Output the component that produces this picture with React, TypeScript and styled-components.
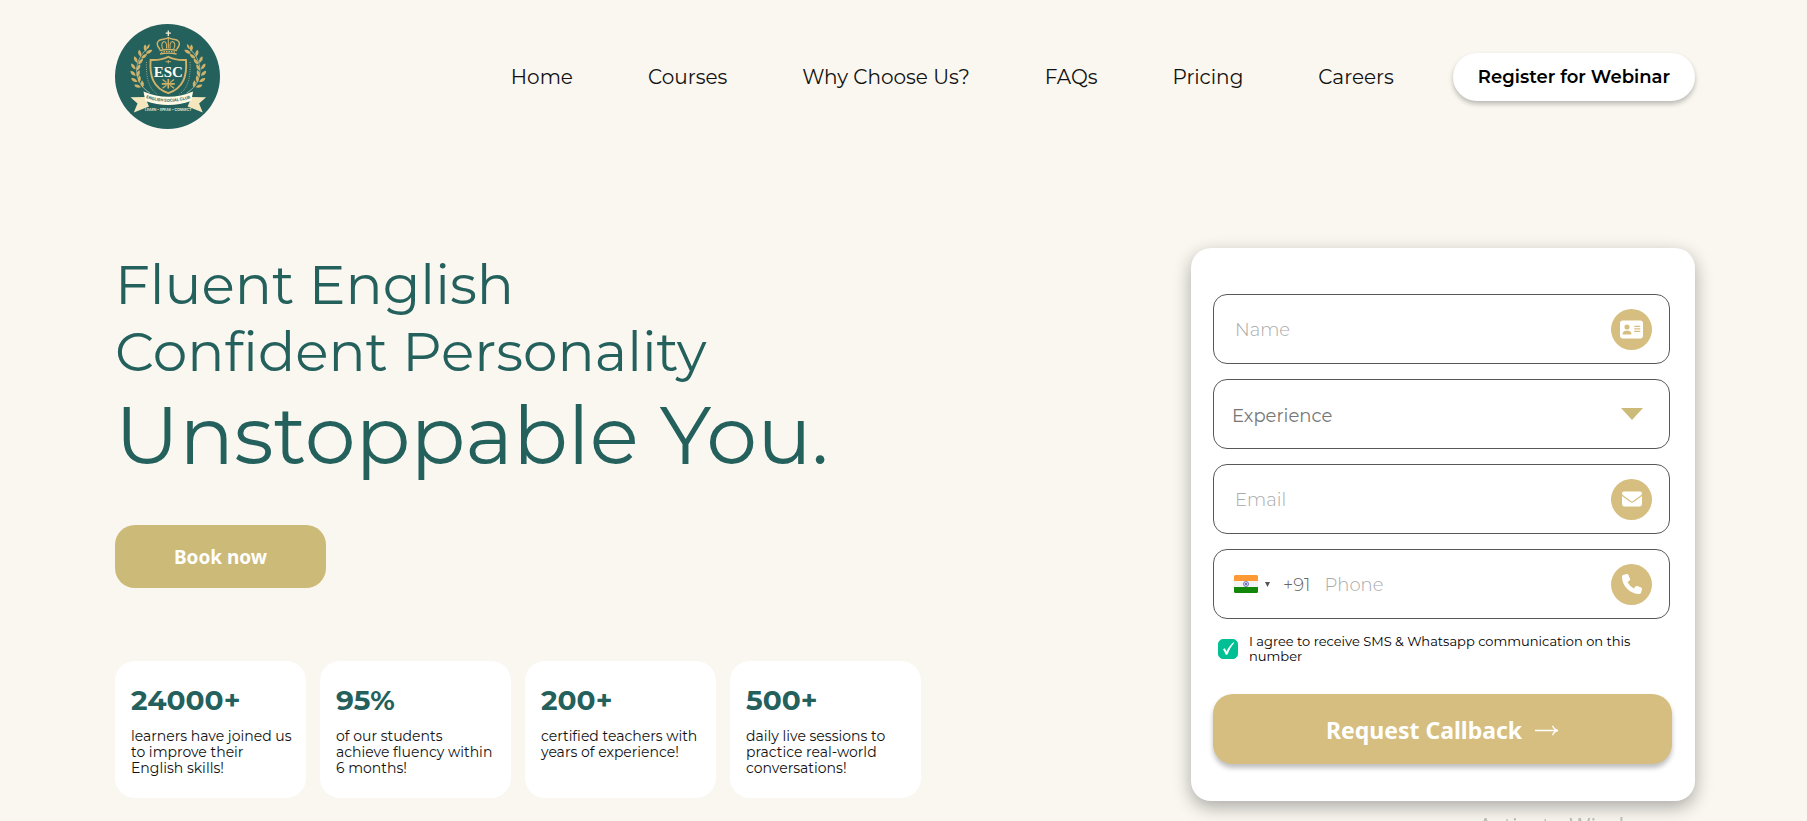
import React from 'react';
import styled, { createGlobalStyle } from 'styled-components';
import { FaAddressCard, FaEnvelope, FaPhone } from 'react-icons/fa6';

const TEAL = '#24605c';
const GOLD = '#d6be80';
const OLIVE = '#ccba78';
const CREAM = '#faf7f0';

const GlobalStyle = createGlobalStyle`
  *, *::before, *::after { box-sizing: border-box; }
  body {
    margin: 0;
    background: ${CREAM};
    color: #111;
    font-family: Montserrat, Inter, sans-serif;
    font-size: 14px;
  }
  button, input, select { font: inherit; color: inherit; }
`;

const Page = styled.div`
  min-height: 100vh;
  padding: 24px 112px 20px 115px;
  overflow: hidden;
`;

const Header = styled.header`
  display: flex;
  align-items: center;
  justify-content: space-between;
`;

const LogoLink = styled.a`
  display: block;
  width: 105px;
  height: 105px;
  svg { display: block; width: 100%; height: 100%; }
`;

const Nav = styled.nav`
  display: flex;
  align-items: center;
  gap: 75px;
`;

const NavLink = styled.a`
  color: #111;
  font-size: 20px;
  line-height: 24px;
  text-decoration: none;
  white-space: nowrap;
`;

const RegisterButton = styled.button`
  height: 48px;
  margin-left: -16px;
  padding: 0 25px;
  border: 0;
  border-radius: 24px;
  background: #fff;
  color: #000;
  font-size: 18px;
  font-weight: 600;
  white-space: nowrap;
  box-shadow: 0 3px 5px rgba(0, 0, 0, 0.25);
  cursor: pointer;
`;

const Hero = styled.main`
  display: flex;
  align-items: flex-start;
  justify-content: space-between;
  gap: 40px;
  padding-top: 119px;
`;

const Pitch = styled.section`
  flex: 0 1 806px;
  padding-top: 3px;
`;

const Headline = styled.h1`
  margin: 0;
  color: ${TEAL};
  font-size: 55px;
  font-weight: 400;
  line-height: 67px;
`;

const HeadlineRow = styled.span<{ $large?: boolean }>`
  display: block;
  ${({ $large }) => $large && 'font-size: 81px; line-height: 101px;'}
`;

const BookButton = styled.button`
  width: 211px;
  height: 63px;
  margin-top: 39px;
  border: 0;
  border-radius: 20px;
  background: ${OLIVE};
  color: #fff;
  font-family: 'Noto Sans', sans-serif;
  font-size: 19px;
  font-weight: 700;
  cursor: pointer;
`;

const Stats = styled.ul`
  display: grid;
  grid-template-columns: repeat(4, 1fr);
  gap: 14px;
  margin: 73px 0 0;
  padding: 0;
  list-style: none;
`;

const StatCard = styled.li`
  padding: 22px 12px 22px 16px;
  border-radius: 20px;
  background: #fff;
`;

const StatValue = styled.strong`
  display: block;
  color: ${TEAL};
  font-size: 28px;
  font-weight: 700;
  line-height: 34px;
`;

const StatText = styled.p`
  margin: 11px 0 0;
  line-height: 16px;
`;

const FormCard = styled.form`
  display: flex;
  flex: 0 0 504px;
  flex-direction: column;
  gap: 15px;
  padding: 46px 25px 37px 22px;
  border-radius: 20px;
  background: #fff;
  box-shadow: 0 6px 18px rgba(0, 0, 0, 0.32);
`;

const Field = styled.div`
  display: flex;
  align-items: center;
  height: 70px;
  padding: 0 17px 0 20px;
  border: 1px solid #58585a;
  border-radius: 14px;
`;

const TextInput = styled.input`
  flex: 1;
  min-width: 0;
  height: 100%;
  padding: 2px 0 0 1px;
  border: 0;
  outline: 0;
  background: transparent;
  color: #444;
  font-size: 18px;
  font-weight: 300;
  &::placeholder { color: #a9a9a9; opacity: 1; }
`;

const Badge = styled.span<{ $iconHeight?: number }>`
  display: grid;
  place-items: center;
  width: 41px;
  height: 41px;
  border-radius: 50%;
  background: ${GOLD};
  color: #fff;
  svg { width: auto; height: ${({ $iconHeight = 20 }) => $iconHeight}px; }
`;

const SelectField = styled.div`
  display: grid;
  align-items: center;
  height: 70px;
  border: 1px solid #58585a;
  border-radius: 14px;
  > * { grid-area: 1 / 1; }
  svg {
    justify-self: end;
    margin-right: 26px;
    pointer-events: none;
  }
`;

const Select = styled.select`
  width: 100%;
  height: 100%;
  padding: 4px 60px 0 18px;
  border: 0;
  outline: 0;
  border-radius: 14px;
  background: transparent;
  color: #777;
  font-size: 18px;
  appearance: none;
`;

const CountryButton = styled.button`
  display: flex;
  align-items: center;
  gap: 7px;
  margin-right: 13px;
  padding: 0;
  border: 0;
  background: transparent;
  cursor: pointer;
`;

const DialCode = styled.span`
  margin-right: 13px;
  padding-top: 2px;
  color: #666;
  font-size: 18px;
  font-weight: 300;
`;

const Consent = styled.label`
  display: flex;
  align-items: center;
  gap: 11px;
  padding-left: 5px;
  color: #000;
  font-size: 13px;
  line-height: 15px;
`;

const CheckWrap = styled.span`
  display: grid;
  flex: none;
  > * { grid-area: 1 / 1; }
  svg { pointer-events: none; visibility: hidden; }
  input:checked + svg { visibility: visible; }
`;

const Checkbox = styled.input`
  width: 20px;
  height: 20px;
  margin: 0;
  border: 1px solid #03c094;
  border-radius: 5px;
  background: #fff;
  appearance: none;
  &:checked { background: #03c094; }
`;

const ConsentText = styled.span`
  max-width: 390px;
`;

const SubmitButton = styled.button`
  display: flex;
  align-items: center;
  justify-content: center;
  gap: 13px;
  height: 70px;
  margin: 15px -2px 0 0;
  padding: 2px 0 0;
  border: 0;
  border-radius: 20px;
  background: ${GOLD};
  color: #fff;
  font-family: 'Noto Sans', sans-serif;
  font-size: 23px;
  font-weight: 700;
  box-shadow: 0 4px 5px rgba(0, 0, 0, 0.25);
  cursor: pointer;
`;

const Watermark = styled.div`
  position: fixed;
  right: 140px;
  bottom: -20px;
  color: rgba(120, 120, 120, 0.45);
  font-family: 'Open Sans', sans-serif;
  font-size: 23px;
  line-height: 30px;
  pointer-events: none;
`;

const LEAVES = [
  [31, 27, 30], [26, 32, 20], [22.5, 38, 8], [20.5, 44.5, -4],
  [20.5, 51, -14], [22, 57, -26], [25.5, 62.5, -38],
];

const Branch = () => (
  <g>
    <path d="M34 23C24 31 18 44 24 57c2 5 6 9 11 12" fill="none" stroke="#bcd0bd" strokeWidth="0.7" />
    {LEAVES.map(([x, y, turn]) => (
      <g key={y} transform={`translate(${x} ${y}) rotate(${turn})`} fill="#d1b268">
        <path d="M0 1C-4-.5-4.600-3-3.800-5.200C-1-4.200.2-2 0 1Z" />
        <path d="M1 2.200C.6-1 2.200-3.200 5-4C5.400-1 4 1.600 1 2.200Z" />
      </g>
    ))}
    <path d="M32 25c-.4-2 .4-4 2.600-5 .4 2.200-.4 4.200-2.600 5Z" fill="#d1b268" />
  </g>
);

const Logo = () => (
  <svg viewBox="0 0 105 105" aria-hidden="true">
    <circle cx="52.500" cy="52.500" r="52.500" fill={TEAL} />
    <path d="M53.300 6.500v5.400M50.700 9.200h5.200" stroke="#f7f1da" strokeWidth="1.300" />
    <g fill="none" stroke="#d1b268">
      <path d="M45 25.500C42 22 41 18.500 44 16.500c3-1.700 6-.6 9.300-2.800 3.300 2.200 6.300 1.100 9.300 2.800 3 2 2 5.500-1 9" strokeWidth="1.500" />
      <path d="M48 25c-2-3.500-1.500-6.500 1-7.500 2.200.3 3 3 2.500 7M58.600 25c2-3.500 1.500-6.500-1-7.500-2.200.3-3 3-2.500 7M53.300 14v10.500" strokeWidth="1.100" />
      <path d="M44.500 26.500q8.800-2 17.600 0M45 30q8.300-1.600 16.600 0" strokeWidth="1.300" />
      <path d="M46 28.300q7.300-1.500 14.600 0" strokeWidth="1.200" strokeDasharray="1.500 1" />
    </g>
    <Branch />
    <g transform="translate(106.600 0) scale(-1 1)"><Branch /></g>
    <path d="M31.500 38C31 52 33 64 42 70M75.100 38c.5 14-1.500 26-10.500 32" fill="none" stroke="#a5b896" strokeWidth="0.900" strokeDasharray="1 1.300" />
    <path d="M53.300 32.800c4.500 2.600 10.500 3.500 17.700 3.200 1.200 16-2.500 28-17.700 33.200C38.100 64 34.400 52 35.600 36c7.200.3 13.200-.6 17.700-3.200Z" fill="none" stroke="#d1b268" strokeWidth="1.900" />
    <path d="M53.300 36v3.400M50.500 37.700h5.600" stroke="#d1b268" strokeWidth="0.900" />
    <text x="53.300" y="52.600" textAnchor="middle" fill="#fffdf0" fontFamily="'Liberation Serif', serif" fontWeight="700" fontSize="15">ESC</text>
    <path d="M46.800 59.800h13M53.300 55v9.600" stroke="#d1b268" strokeWidth="1.700" />
    <path d="M47.500 55.500l4 3M59.100 55.500l-4 3M47.500 64.200l4-3M59.100 64.200l-4-3" stroke="#d1b268" strokeWidth="1.100" />
    <path d="M30 73L15.500 73.200l7 6.200L18.800 88.500 34 82.500Z" fill="#f4e6bd" />
    <path d="M76.600 73l14.500.2-7 6.200 3.700 9.100L72.600 82.500Z" fill="#f4e6bd" />
    <path d="M28.500 67.500Q53.300 78 78.100 67.500L76.200 77Q53.300 85 30.400 77Z" fill="#fffbe6" />
    <path id="motto-curve" d="M28.500 73.200Q53.300 82.400 78.100 73.200" fill="none" />
    <text fill={TEAL} fontFamily="Inter, sans-serif" fontWeight="700" fontSize="4">
      <textPath href="#motto-curve" startOffset="50%" textAnchor="middle">ENGLISH SOCIAL CLUB</textPath>
    </text>
    <text x="53.300" y="86.600" textAnchor="middle" fill="#e9efdf" fontFamily="Inter, sans-serif" fontWeight="600" fontSize="3.400">LEARN • SPEAK • CONNECT</text>
  </svg>
);

const IndiaFlag = () => (
  <svg width="24" height="18" viewBox="0 0 24 18" aria-hidden="true">
    <rect width="24" height="18" rx="1.500" fill="#f3f3f3" />
    <path d="M1.500 0h21A1.500 1.500 0 0 1 24 1.500V6H0V1.500A1.500 1.500 0 0 1 1.500 0Z" fill="#ff9933" />
    <path d="M0 12h24v4.500a1.500 1.500 0 0 1-1.500 1.500h-21A1.500 1.500 0 0 1 0 16.500Z" fill="#138808" />
    <circle cx="12" cy="9" r="2.500" fill="#dcdcf0" stroke="#5a5aa8" strokeWidth="0.800" />
    <circle cx="12" cy="9" r="0.900" fill="#3c3c96" />
  </svg>
);

const NAV_ITEMS = ['Home', 'Courses', 'Why Choose Us?', 'FAQs', 'Pricing', 'Careers'];

const STATS = [
  { value: '24000+', text: 'learners have joined us to improve their English skills!' },
  { value: '95%', text: 'of our students achieve fluency within 6 months!' },
  { value: '200+', text: 'certified teachers with years of experience!' },
  { value: '500+', text: 'daily live sessions to practice real-world conversations!' },
];

export default function App() {
  return (
    <>
      <GlobalStyle />
      <Page>
        <Header>
          <LogoLink href="#" aria-label="English Social Club"><Logo /></LogoLink>
          <Nav>
            {NAV_ITEMS.map((item) => <NavLink key={item} href="#">{item}</NavLink>)}
            <RegisterButton type="button">Register for Webinar</RegisterButton>
          </Nav>
        </Header>

        <Hero>
          <Pitch>
            <Headline>
              <HeadlineRow>Fluent English</HeadlineRow>
              <HeadlineRow>Confident Personality</HeadlineRow>
              <HeadlineRow $large>Unstoppable You.</HeadlineRow>
            </Headline>
            <BookButton type="button">Book now</BookButton>
            <Stats>
              {STATS.map(({ value, text }) => (
                <StatCard key={value}>
                  <StatValue>{value}</StatValue>
                  <StatText>{text}</StatText>
                </StatCard>
              ))}
            </Stats>
          </Pitch>

          <FormCard onSubmit={(e) => e.preventDefault()}>
            <Field>
              <TextInput type="text" placeholder="Name" aria-label="Name" />
              <Badge $iconHeight={23}><FaAddressCard /></Badge>
            </Field>
            <SelectField>
              <Select aria-label="Experience" defaultValue="">
                <option value="">Experience</option>
                <option value="student">Student</option>
                <option value="professional">Professional</option>
              </Select>
              <svg width="22" height="12" viewBox="0 0 22 12" aria-hidden="true">
                <path d="M0 0h22L11 12Z" fill={OLIVE} />
              </svg>
            </SelectField>
            <Field>
              <TextInput type="email" placeholder="Email" aria-label="Email" />
              <Badge><FaEnvelope /></Badge>
            </Field>
            <Field>
              <CountryButton type="button" aria-label="Country: India">
                <IndiaFlag />
                <svg width="5" height="5" viewBox="0 0 5 5" aria-hidden="true">
                  <path d="M0 0h5L2.500 5Z" fill="#555" />
                </svg>
              </CountryButton>
              <DialCode>+91</DialCode>
              <TextInput type="tel" placeholder="Phone" aria-label="Phone" />
              <Badge><FaPhone /></Badge>
            </Field>
            <Consent>
              <CheckWrap>
                <Checkbox type="checkbox" defaultChecked />
                <svg width="20" height="20" viewBox="0 0 20 20" aria-hidden="true">
                  <path d="M5 10.200l1.900-1 1.600 3.200C10.200 8.600 12.300 5.800 15.600 3.200l.6.500C13 7.600 11 11.200 9.500 15.500l-1.800.2C7 13.700 6.200 12 5 10.200Z" fill="#fff" />
                </svg>
              </CheckWrap>
              <ConsentText>I agree to receive SMS &amp; Whatsapp communication on this number</ConsentText>
            </Consent>
            <SubmitButton type="submit">
              Request Callback
              <svg width="24" height="11" viewBox="0 0 24 11" fill="none" stroke="#fff" strokeWidth="1.300" aria-hidden="true">
                <path d="M0 5.500h23M17.500.8c1 2.600 2.800 4.100 5.500 4.700-2.700.6-4.500 2.100-5.500 4.700" />
              </svg>
            </SubmitButton>
          </FormCard>
        </Hero>
      </Page>
      <Watermark>Activate Windows</Watermark>
    </>
  );
}
